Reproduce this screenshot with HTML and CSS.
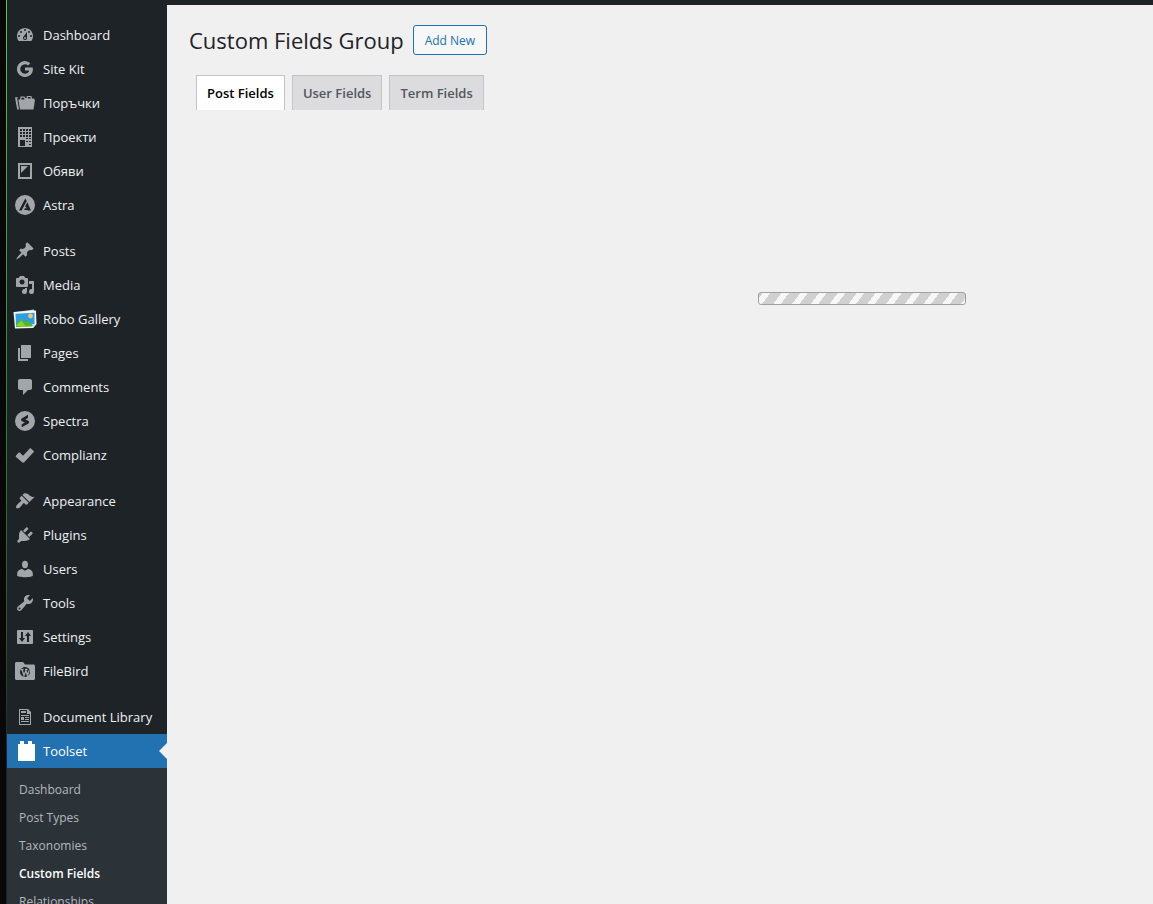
FILE: index.html
```
<!DOCTYPE html>
<html lang="en">
<head>
    <meta charset="UTF-8">
    <meta name="viewport" content="width=device-width, initial-scale=1.0">
    <title>Custom Fields Group</title>
    <link rel="stylesheet" href="styles.css">
</head>
<body>

    <div class="admin-bar"></div>

    <div class="layout">
        <div class="edge"></div>

        <nav class="admin-menu" aria-label="Main menu">
            <ul class="menu-group">
                <li><a href="#"><svg viewBox="0 0 20 20"><path fill-rule="evenodd" d="M3.760 16h12.480c1.100-1.370 1.760-3.110 1.760-5 0-4.420-3.580-8-8-8s-8 3.580-8 8c0 1.890.66 3.630 1.760 5zM10 4a1 1 0 1 1 0 2 1 1 0 0 1 0-2zM6 6a1 1 0 1 1 0 2 1 1 0 0 1 0-2zm8 0a1 1 0 1 1 0 2 1 1 0 0 1 0-2zM12 7v6a2 2 0 1 1-3.370-1.450zM4 10a1 1 0 1 1 0 2 1 1 0 0 1 0-2zm12 0a1 1 0 1 1 0 2 1 1 0 0 1 0-2zm-5 3a1 1 0 1 0-2 0 1 1 0 0 0 2 0z"/></svg>Dashboard</a></li>
                <li><a href="#"><svg viewBox="0 0 20 20"><path d="M10 8.600v2.900h4.300c-.4 1.900-2 3.200-4.300 3.200a4.700 4.700 0 1 1 3.100-8.200l2.200-2.200A7.900 7.900 0 1 0 10 17.900c4.700 0 7.900-3.200 7.900-7.800 0-.5-.1-1-.2-1.500z"/></svg>Site Kit</a></li>
                <li><a href="#"><svg viewBox="0 0 20 20"><path d="M0 4.500l3-.6L2.200 5.500 4 16.500H2.200zM3.300 6.500H5l.5-3h4l.8 1.500h1.200l.3-2h4.600l.6 2.500h2.200v1.200H20l-1.500 9.800H5zM6.300 6.500h3.200l-.5-1.800H6.500zm6.400-1h3l-.3-1.400h-2.500z" fill-rule="evenodd"/></svg>Поръчки</a></li>
                <li><a href="#"><svg viewBox="0 0 20 20"><path fill-rule="evenodd" d="M3 0h14v20H3zM5 2v2h2V2zm3 0v2h2V2zm3 0v2h2V2zm3 0v2h2V2zM5 5v2h2V5zm3 0v2h2V5zm3 0v2h2V5zm3 0v2h2V5zM5 8v2h2V8zm3 0v2h2V8zm3 0v2h2V8zm3 0v2h2V8zM5 13v6h5v-6zm6-2v1h2v-1zm3 0v1h2v-1zm-3 3v1h2v-1zm3 0v1h2v-1zm0 3v1h2v-1z"/></svg>Проекти</a></li>
                <li><a href="#"><svg viewBox="0 0 20 20"><path fill-rule="evenodd" d="M3 2h14v16H3zm2 2v12h10V4zM6 5h7l-7 7z"/></svg>Обяви</a></li>
                <li><a href="#"><svg viewBox="0 0 20 20"><path fill-rule="evenodd" d="M10 0a10 10 0 1 1 0 20 10 10 0 0 1 0-20zM10.200 3.500L4 15.400h2.600l5.100-9.400zM12.300 7.300L10.200 11.300l1.500 2H9.900l-.8 1.700h3.300l.3.400h3.300z"/></svg>Astra</a></li>
            </ul>

            <ul class="menu-group">
                <li><a href="#"><svg viewBox="0 0 20 20"><path d="M10.440 3.020l1.820-1.820 6.360 6.350-1.830 1.820c-1.050-.68-2.480-.57-3.410.36l-.75.75c-.92.930-1.040 2.350-.35 3.410l-1.830 1.820-2.410-2.410-2.800 2.790c-.42.42-3.380 2.710-3.800 2.290s1.860-3.390 2.280-3.810l2.790-2.790L4.100 9.360l1.830-1.820c1.050.69 2.480.57 3.400-.36l.75-.75c.930-.92 1.050-2.350.36-3.410z"/></svg>Posts</a></li>
                <li><a href="#"><svg viewBox="0 0 20 20"><path fill-rule="evenodd" d="M13 11V4c0-.55-.45-1-1-1h-1.670L9 1H5L3.670 3H2c-.55 0-1 .45-1 1v7c0 .55.45 1 1 1h10c.55 0 1-.45 1-1zM7 4.500a2.500 2.500 0 1 1 0 5 2.500 2.500 0 0 1 0-5z"/><path d="M14 6h5v10.500a2.500 2.500 0 1 1-2-2.450V9h-3zM10 14.050V13h2v3.500a2.500 2.500 0 1 1-2-2.450z"/></svg>Media</a></li>
                <li><a href="#"><svg class="icon-wide" viewBox="0 0 24 20"><path fill="#c9d3d6" d="M3 3L21 .5l2 14-18 3z"/><path fill="#f4f7f8" d="M.5 3L23 1.500 23.500 15 20 19 2 19.500z"/><path fill="#2d9de5" d="M2.500 4.800L21.500 3.800V15L3 17.500z"/><circle cx="17.500" cy="7" r="2.400" fill="#f5c56a"/><path fill="#55b828" d="M3 16l5-6.500 4 4 2.500-2 6 5.500-2 .6L3 18z"/><path fill="#8ed32b" d="M3 17l5-5 5 5.600z"/><path fill="#cbdde4" d="M23.500 15l-4 .2L20 19z"/></svg>Robo Gallery</a></li>
                <li><a href="#"><svg viewBox="0 0 20 20"><path d="M6 15V2h10v13zM5 16h8v2H3V5h2z"/></svg>Pages</a></li>
                <li><a href="#"><svg viewBox="0 0 20 20"><path d="M5 2h10c1.100 0 2 .9 2 2v7c0 1.100-.9 2-2 2h-2l-5 5v-5H5c-1.100 0-2-.9-2-2V4c0-1.100.9-2 2-2z"/></svg>Comments</a></li>
                <li><a href="#"><svg viewBox="0 0 20 20"><path fill-rule="evenodd" d="M10 0a10 10 0 1 1 0 20 10 10 0 0 1 0-20zM13 3.800L7 7.200c-1.200.8-1.300 2.300-.1 3l3 1.300-3.200 1.800v3l6.500-3.600c1.200-.8 1.300-2.300.1-3L10.300 8.400 13 6.900z"/></svg>Spectra</a></li>
                <li><a href="#"><svg viewBox="0 0 20 20"><path d="M1 10.500l2.500-2.700c.5-.4 1-.4 1.500 0l3 2.900 6.500-7c.6-.5 1.200-.5 1.700 0l2.300 2.100c.5.5.5 1 0 1.500l-9.300 9.900c-.6.6-1.500.6-2.100 0L1 12c-.4-.5-.4-1 0-1.500z"/></svg>Complianz</a></li>
            </ul>

            <ul class="menu-group">
                <li><a href="#"><svg viewBox="0 0 20 20"><path d="M14.480 11.060L7.410 3.990l1.500-1.500c.5-.56 2.300-.47 3.510.32 1.210.8 1.430 1.280 2.910 2.100 1.180.64 2.450 1.260 4.450.85zM13.770 11.770L6.700 4.700 4.930 6.470c-.39.39-.39 1.020 0 1.410l1.060 1.060c.39.39.39 1.030 0 1.420-.6.6-1.430 1.110-2.210 1.690-.35.26-.7.53-1.010.84C1.430 14.230.4 16.080 1.400 17.070c.99 1 2.840-.03 4.180-1.360.31-.31.58-.66.85-1.020.57-.78 1.080-1.610 1.690-2.210.39-.39 1.020-.39 1.410 0l1.060 1.060c.39.39 1.020.39 1.410 0z"/></svg>Appearance</a></li>
                <li><a href="#"><svg viewBox="0 0 20 20"><path d="M13.110 4.360L9.870 7.600 8 5.730l3.240-3.240c.35-.34 1.050-.2 1.560.32.52.51.66 1.210.31 1.550zM5.110 6.130l.91-1.120 9.010 9.010-1.190.84c-.71.71-2.630 1.160-3.820 1.160H6.140L4.900 17.260c-.59.59-1.540.59-2.120 0-.59-.58-.59-1.530 0-2.120l1.240-1.240v-3.880c0-1.130.4-3.190 1.090-3.890zM12.370 10.100l3.240-3.240c.34-.35 1.040-.21 1.550.31.52.51.66 1.210.31 1.550l-3.240 3.250z"/></svg>Plugins</a></li>
                <li><a href="#"><svg viewBox="0 0 20 20"><ellipse cx="10" cy="5.500" rx="3" ry="3.800"/><path d="M7.200 10L10 11.800 12.800 10c2.600 0 5 2.300 5 4.500V17s-4 1.300-7.800 1.300S2.200 17 2.200 17v-2.500c0-2.200 2.400-4.500 5-4.500z"/></svg>Users</a></li>
                <li><a href="#"><svg viewBox="0 0 20 20"><path fill-rule="evenodd" d="M16.680 9.770c-1.340 1.340-3.300 1.670-4.950.99l-5.410 6.520c-.99.99-2.590.99-3.580 0s-.99-2.590 0-3.570l6.520-5.420c-.68-1.650-.35-3.610.99-4.950 1.280-1.280 3.120-1.620 4.720-1.060l-2.890 2.890 2.820 2.820 2.860-2.870c.53 1.580.18 3.390-1.080 4.650zM4.500 14.500a1 1 0 1 0 0 2 1 1 0 0 0 0-2z"/></svg>Tools</a></li>
                <li><a href="#"><svg viewBox="0 0 20 20"><path fill-rule="evenodd" d="M3 3h14c.55 0 1 .45 1 1v12c0 .55-.45 1-1 1H3c-.55 0-1-.45-1-1V4c0-.55.45-1 1-1zM6 5v6H4l3 4 3-4H8V5zM13 5l-3 4h2v6h2V9h2z"/></svg>Settings</a></li>
                <li><a href="#"><svg viewBox="0 0 20 20"><path d="M1.500 1H8l2 2.500h8.500c.8 0 1.500.7 1.500 1.500v12.500c0 .8-.7 1.500-1.500 1.500h-17C.7 19 0 18.300 0 17.500v-15C0 1.700.7 1 1.500 1z"/><circle cx="10" cy="11" r="5" class="mark-dark"/><path class="mark-line" d="M6 8.500h2.500M10 8.500h2.500M7 8.500l2 6 1.700-4.500M10.500 8.500l2 6 1.500-5"/></svg>FileBird</a></li>
            </ul>

            <ul class="menu-group">
                <li><a href="#"><svg viewBox="0 0 20 20"><path fill-rule="evenodd" d="M4 2h9l3 3v13H4zm1 1v14h10V7h-3V3zM6 4h5v2H6zm0 4h8v1H6zm0 2h3v3H6zm4 0h4v1h-4zm0 2h4v1h-4zm-4 2h8v1H6z"/></svg>Document Library</a></li>
                <li class="current">
                    <a href="#"><svg class="icon-toolset" viewBox="0 0 20 20"><path d="M5 3V0h4v3h4V0h4v3h3v17H3V3z"/></svg>Toolset</a>
                    <ul class="submenu">
                        <li><a href="#">Dashboard</a></li>
                        <li><a href="#">Post Types</a></li>
                        <li><a href="#">Taxonomies</a></li>
                        <li><a href="#" class="active" aria-current="page">Custom Fields</a></li>
                        <li><a href="#">Relationships</a></li>
                    </ul>
                </li>
            </ul>
        </nav>

        <main class="content">
            <header class="page-header">
                <h1>Custom Fields Group</h1>
                <button type="button" class="add-new">Add New</button>
            </header>

            <nav class="tabs" aria-label="Field types">
                <a href="#" class="tab tab-active">Post Fields</a>
                <a href="#" class="tab">User Fields</a>
                <a href="#" class="tab">Term Fields</a>
            </nav>

            <div class="loading-bar" role="progressbar" aria-label="Loading"></div>
        </main>
    </div>

</body>
</html>
```
FILE: styles.css
```
* {
    box-sizing: border-box;
}

body {
    margin: 0;
    height: 100vh;
    overflow: hidden;
    display: flex;
    flex-direction: column;
    background-color: #f0f0f1;
    color: #1d2327;
    font-family: 'Segoe UI', 'Open Sans', 'Noto Sans', sans-serif;
    font-size: 13px;
}

ul {
    list-style: none;
    margin: 0;
    padding: 0;
}

a {
    text-decoration: none;
}

.admin-bar {
    flex: none;
    height: 5px;
    margin-left: 7px;
    background-color: #1d2327;
}

.layout {
    flex: 1;
    min-height: 0;
    display: flex;
}

/* Dark strip along the window edge */
.edge {
    flex: none;
    width: 7px;
    margin-top: -5px;
    background-color: #080808;
    border-right: 1px solid;
    border-image: linear-gradient(#5cc456, #3f9a3c 30%, #245c26 70%, #1d2327 85%) 1;
}

/* Sidebar */
.admin-menu {
    flex: none;
    width: 160px;
    padding-top: 13px;
    background-color: #1d2327;
}

.menu-group + .menu-group {
    margin-top: 12px;
}

.menu-group a {
    display: flex;
    align-items: center;
    gap: 8px;
    height: 34px;
    padding-left: 8px;
    color: #f0f0f1;
    font-size: 13px;
    white-space: nowrap;
}

.menu-group svg {
    flex: none;
    width: 20px;
    height: 20px;
    fill: #a2a6ab;
}

.menu-group .icon-wide {
    width: 24px;
    margin: 0 -2px;
}

.menu-group .icon-toolset {
    fill: #fff;
    overflow: visible;
}

.mark-dark {
    fill: #1d2327;
}

.mark-line {
    fill: none;
    stroke: #a2a6ab;
    stroke-width: 1.3;
}

.current > a {
    position: relative;
    background-color: #2271b1;
    color: #fff;
}

.current > a::after {
    content: '';
    position: absolute;
    right: 0;
    top: 9px;
    border: 8px solid transparent;
    border-left-width: 0;
    border-right-color: #f0f0f1;
}

.submenu {
    padding: 7px 0;
    background-color: #2c3338;
}

.submenu a {
    height: 28px;
    padding-left: 12px;
    color: #b4b8bb;
    font-size: 12px;
}

.submenu .active {
    color: #fff;
    font-weight: 600;
}

/* Page content */
.content {
    flex: 1;
    min-width: 0;
    padding: 20px 0 0 22px;
}

.page-header {
    display: flex;
    align-items: center;
    gap: 9px;
}

.page-header h1 {
    margin: 0;
    font-size: 22px;
    font-weight: 400;
    line-height: 28px;
}

.add-new {
    height: 30px;
    padding: 0 11px;
    border: 1px solid #2271b1;
    border-radius: 3px;
    background-color: #f6f7f7;
    color: #2271b1;
    font-family: inherit;
    font-size: 12px;
    cursor: pointer;
}

.tabs {
    display: flex;
    gap: 7px;
    margin: 20px 0 0 7px;
}

.tab {
    height: 35px;
    padding: 0 10px;
    border: 1px solid #c3c4c7;
    border-bottom: 0;
    background-color: #dcdcde;
    color: #50575e;
    font-size: 13px;
    font-weight: 600;
    line-height: 34px;
}

.tab-active {
    background-color: #fff;
    color: #000;
}

.loading-bar {
    width: 208px;
    height: 13px;
    margin: 182px 0 0 59%;
    border: 1px solid #a0a0a0;
    border-radius: 3px;
    background: repeating-linear-gradient(127deg, #d0d0d0 0 3px, #f7f7f7 3px 9px, #d0d0d0 9px 15px);
}
```
